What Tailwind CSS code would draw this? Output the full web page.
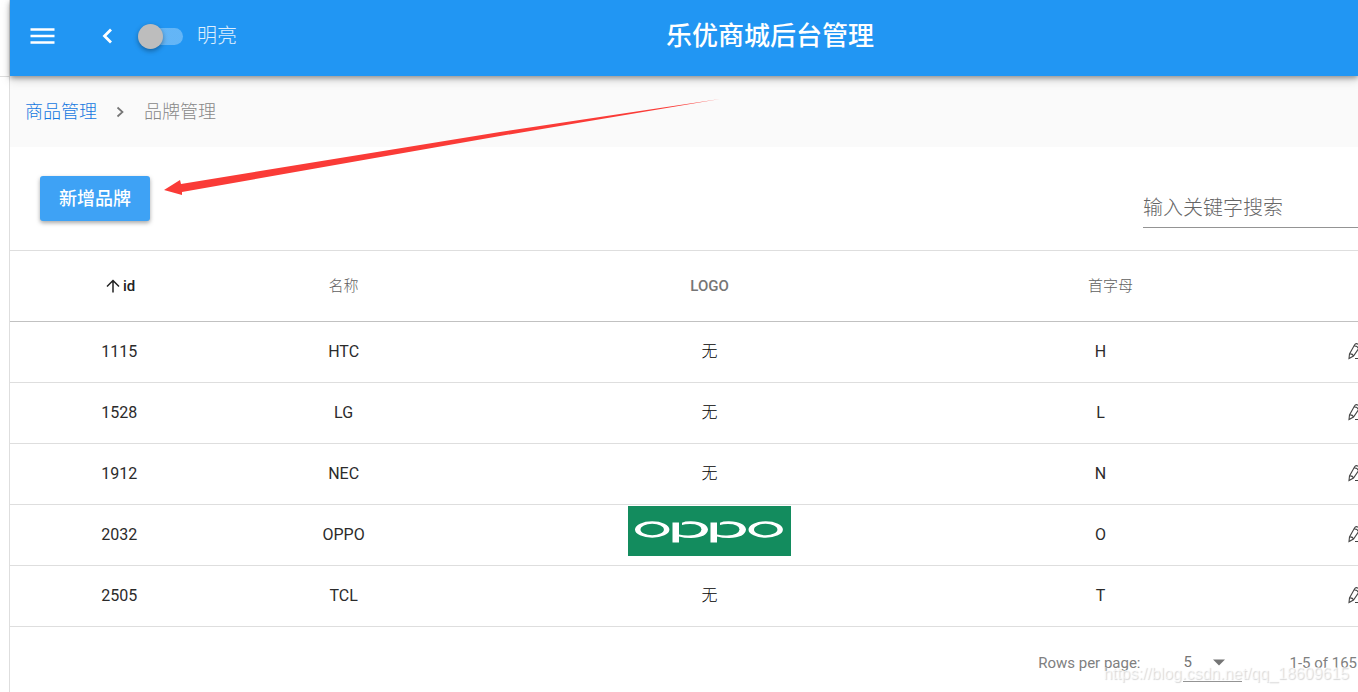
<!DOCTYPE html>
<html lang="zh-CN">
<head>
<meta charset="utf-8">
<meta name="viewport" content="width=device-width, initial-scale=1">
<title>乐优商城后台管理</title>
<script src="https://cdn.jsdelivr.net/npm/@tailwindcss/browser@4"></script>
</head>
<body class="flex min-h-screen overflow-x-hidden bg-white font-['Roboto','Noto_Sans_CJK_SC',sans-serif] text-[#2b2b2b]">
<svg class="hidden" aria-hidden="true">
  <symbol id="edit" viewBox="0 0 20 20">
    <path d="M2 16.500L2.500 12L7.500 3Q9 .5 11.500 2.500Q13.500 4 12 6L6.500 14Z M2.500 12Q5.500 11.500 6.500 14 M7 4Q10 3.500 11.500 6.500 M2 16.500L4 15.500 M8 16.500H19" fill="none" stroke="#444" stroke-width="1.100"/>
  </symbol>
</svg>
<aside class="w-[10px] shrink-0 border-r border-[#dedede]"><div class="h-[77px] border-b border-[#dedede]"></div></aside>
<main class="min-w-0 flex-1">
  <header class="relative z-10 flex h-[76px] items-center bg-[#2196f3] pb-[4px] text-white shadow-[0_2px_5px_rgba(0,0,0,0.35),0_4px_10px_rgba(0,0,0,0.15)]">
    <div class="flex flex-1 items-center pl-[20px]">
      <button type="button" aria-label="菜单"><svg class="h-[16px] w-[25px]" viewBox="0 0 25 16"><path d="M.5 1.500h24M.5 8h24M.5 14.500h24" stroke="white" stroke-width="2.500"/></svg></button>
      <button type="button" aria-label="返回" class="ml-[47px]"><svg class="h-[16px] w-[11px]" viewBox="0 0 11 16"><path d="M9 1.500L2.500 8L9 14.500" fill="none" stroke="white" stroke-width="2.800"/></svg></button>
      <label class="ml-[25px] flex items-center">
        <input type="checkbox" class="relative h-[17px] w-[45px] appearance-none rounded-full bg-linear-to-r from-transparent from-10% to-10% to-white/30 before:absolute before:-top-1 before:left-0 before:size-[25px] before:rounded-full before:bg-[#bdbdbd] before:shadow-[0_2px_5px_rgba(0,0,0,0.35)]">
        <span class="ml-[14px] text-[20px] leading-6 font-light text-white/85">明亮</span>
      </label>
    </div>
    <h1 class="ml-[152px] text-[26px] leading-8 font-medium">乐优商城后台管理</h1>
    <div class="flex-1"></div>
  </header>
  <nav aria-label="面包屑" class="flex h-[71px] items-center bg-[#fafafa] pl-[15px] text-[18px] font-light">
    <a href="#" class="text-[#1478e0]">商品管理</a>
    <svg class="mx-[19px] h-[12px] w-[9px]" viewBox="0 0 9 12" aria-hidden="true"><path d="M1.500 1.500L6.500 6L1.500 10.500" fill="none" stroke="#757575" stroke-width="1.700"/></svg>
    <span class="text-[#888]">品牌管理</span>
  </nav>
  <section>
    <div class="flex h-[103px] items-start justify-between pt-[29px] pl-[30px]">
      <button type="button" class="h-[45px] rounded-[3px] bg-[#3ea2f5] px-[19px] text-[18px] font-medium text-white shadow-[0_2px_4px_rgba(0,0,0,0.35)]">新增品牌</button>
      <input type="text" aria-label="输入关键字搜索" placeholder="输入关键字搜索" class="mt-[12px] h-[40px] w-[215px] border-b border-[#949494] text-[20px] font-light outline-none placeholder:text-[#666]">
    </div>
    <table class="w-full table-fixed border-collapse text-center text-[16px]">
      <colgroup><col class="w-[16.2%]"><col class="w-[17.1%]"><col class="w-[37.2%]"><col class="w-[20.8%]"><col></colgroup>
      <thead>
        <tr class="h-[71px] border-y border-t-[#dedede] border-b-[#c1c1c1] text-[15px] text-[#757575]">
          <th class="pl-[3px] font-medium text-[#222]"><button type="button" class="inline-flex items-center gap-[3px] align-middle"><svg class="h-[14px] w-[14px]" viewBox="0 0 14 14" aria-hidden="true"><path d="M7 13.500V1.500M1 7.500L7 1.500L13 7.500" fill="none" stroke="#222" stroke-width="1.500"/></svg>id</button></th>
          <th class="font-light text-[#606060]">名称</th><th class="font-medium">LOGO</th><th class="pl-[20px] font-light text-[#606060]">首字母</th><th aria-label="操作"></th>
        </tr>
      </thead>
      <tbody>
        <tr class="h-[61px] border-b border-[#dedede]"><td>1115</td><td>HTC</td><td class="font-light text-black">无</td><td>H</td><td><button type="button" aria-label="编辑 HTC" class="float-right -mr-[9px]"><svg class="size-[20px]"><use href="#edit"/></svg></button></td></tr>
        <tr class="h-[61px] border-b border-[#dedede]"><td>1528</td><td>LG</td><td class="font-light text-black">无</td><td>L</td><td><button type="button" aria-label="编辑 LG" class="float-right -mr-[9px]"><svg class="size-[20px]"><use href="#edit"/></svg></button></td></tr>
        <tr class="h-[61px] border-b border-[#dedede]"><td>1912</td><td>NEC</td><td class="font-light text-black">无</td><td>N</td><td><button type="button" aria-label="编辑 NEC" class="float-right -mr-[9px]"><svg class="size-[20px]"><use href="#edit"/></svg></button></td></tr>
        <tr class="h-[61px] border-b border-[#dedede]"><td>2032</td><td>OPPO</td><td class="pb-[8px]">
          <svg class="mx-auto h-[50px] w-[163px]" viewBox="0 0 163 50" role="img" aria-label="OPPO">
            <rect width="163" height="50" fill="#138c5e"/>
            <g fill="white" fill-rule="evenodd">
              <path d="M7 23.500a17.200 8.200 0 1 0 34.400 0a17.200 8.200 0 1 0-34.400 0zM12.500 23.500a11.700 5.700 0 1 0 23.400 0a11.700 5.700 0 1 0-23.400 0z"/>
              <path d="M120.500 23.500a17.200 8.200 0 1 0 34.400 0a17.200 8.200 0 1 0-34.400 0zM126 23.500a11.700 5.700 0 1 0 23.400 0a11.700 5.700 0 1 0-23.400 0z"/>
              <path id="bowl" d="M44.500 16.500H51V28.500Q56 29.700 61 29.500Q73 29 73.500 23.500Q73 18 62 18Q57 18 54 19V16.700Q57 15.200 63 15.300Q79 16 80 23.500Q79 31.500 63 32Q56 32 51 30.500V36.500H44.500Z"/>
              <use href="#bowl" x="38"/>
            </g>
          </svg></td><td>O</td><td><button type="button" aria-label="编辑 OPPO" class="float-right -mr-[9px]"><svg class="size-[20px]"><use href="#edit"/></svg></button></td></tr>
        <tr class="h-[61px] border-b border-[#dedede]"><td>2505</td><td>TCL</td><td class="font-light text-black">无</td><td>T</td><td><button type="button" aria-label="编辑 TCL" class="float-right -mr-[9px]"><svg class="size-[20px]"><use href="#edit"/></svg></button></td></tr>
      </tbody>
    </table>
    <footer class="flex h-[65px] items-center justify-end pt-[7px] pr-[1px] text-[15px] text-[#808080]">
      <label for="rows">Rows per page:</label>
      <div class="relative -mt-px ml-[43px] self-start">
        <select id="rows" class="h-[49px] w-[59px] appearance-none border-b border-[#949494] pt-[10px] text-[#757575] outline-none"><option>5</option><option>10</option><option>25</option></select>
        <svg class="pointer-events-none absolute top-[26px] right-[17px] h-[7px] w-[12px]" viewBox="0 0 12 7" aria-hidden="true"><path d="M0 .5h12L6 6.500z" fill="#757575"/></svg>
      </div>
      <span class="ml-[47px]">1-5 of 165</span>
    </footer>
  </section>
</main>
<svg class="pointer-events-none absolute top-[95px] left-[160px] z-20 h-[105px] w-[565px]" viewBox="160 95 565 105" aria-hidden="true"><path d="M164 190L180 180L181 184L500 132L720 99L500 136L182 192V195Z" fill="#fa3b37"/></svg>
<p class="pointer-events-none absolute right-[9px] bottom-[8px] z-20 font-['Liberation_Sans',sans-serif] text-[16px] leading-5 text-white/60 [text-shadow:1px_1px_1px_rgba(0,0,0,0.16)]">https://blog.csdn.net/qq_18609615</p>
</body>
</html>
